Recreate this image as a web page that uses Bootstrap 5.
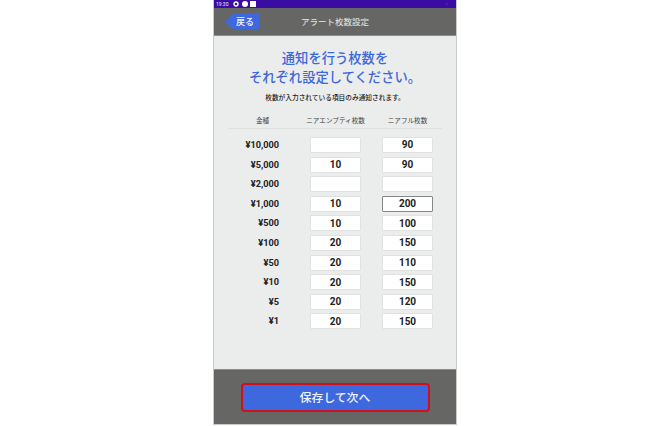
<!DOCTYPE html>
<html lang="ja"><head><meta charset="utf-8">
<link href="https://cdn.jsdelivr.net/npm/bootstrap@5.3.0/dist/css/bootstrap.min.css" rel="stylesheet">
<style>
html,body{height:100%;margin:0;background:#fff;overflow:hidden}
body{font-family:"Noto Sans CJK JP","Roboto",sans-serif}
.phone{width:244px;height:425px;margin-left:213px;border-left:1px solid #c9cbca;border-right:1px solid #c9cbca;border-bottom:1px solid #c9cbca}
.stat{height:8px;background:#3a0ca3;color:#e8e4f5;font-family:"Roboto",sans-serif;font-size:5px;line-height:8px;padding:0 8px 0 2px;gap:2px}
.stat svg{margin-left:3px}
.stat i{display:block;background:#fff}
.ic1{width:6px;height:6px;border-radius:50%;margin-left:1px}
.ic2{width:6px;height:6px}
.stat-r{font-size:4px;color:#b8aee0}
.hdr{height:28px;background:#666764;color:#e9e9e7;font-size:8.5px;border-bottom:1px solid #8c8d8a}
.back{position:absolute;left:11px;top:6px;width:34px;height:15px;background:#3e68de;color:#f2f5fe;font-size:9px;font-weight:500;clip-path:polygon(8px 0,100% 0,100% 100%,8px 100%,0 50%);padding-left:6px}
.hdr-in{height:100%}
.body-a{height:334px;background:#ebeded;padding:12.5px 14px 0}
.ttl{color:#3d68dc;font-size:13.3px;line-height:19px;font-weight:500;margin:0}
.sub{font-size:6.7px;line-height:9px;font-weight:500;color:#1e1e1e;margin:7px 0 0}
.grid-x{display:grid;grid-template-columns:61px 51px 51px;column-gap:21px}
.heads{margin-top:12.5px;height:14px;border-bottom:1px solid #dfe1e1;color:#444;font-size:6.6px;line-height:10px}
.heads span{justify-self:center;white-space:nowrap}
.heads .lab0{padding-left:8px}
.rows{margin-top:8px;row-gap:3.6px}
.amt{font-family:"Roboto",sans-serif;font-weight:700;font-size:9.2px;color:#222;text-align:right;line-height:16px;width:51px}
.cell.form-control{height:16px;min-height:0;padding:0;border:1px solid #e0e2e2;border-radius:1px;background:#fff;font-family:"Roboto",sans-serif;font-weight:700;font-size:10px;line-height:14px;color:#222;text-align:center;box-shadow:none}
.cell.act{border-color:#85878a}
.foot{height:55px;background:#666764;border-top:1px solid #8c8d8a}
.save{width:189px;height:29px;background:#3e68de;border:2px solid #d0101c;border-radius:4px;color:#f2f5fe;font-size:11.8px;font-weight:500;padding:0;line-height:24px}
.save:hover{background:#3e68de;color:#f2f5fe;border-color:#d0101c}
</style></head>
<body>
<div class="phone d-flex flex-column">
  <div class="stat d-flex align-items-center"><span>19:30</span><svg width="6" height="6" viewBox="0 0 6 6"><circle cx="3" cy="3" r="2" fill="none" stroke="#fff" stroke-width="1.4"/></svg><i class="ic1"></i><i class="ic2"></i><span class="ms-auto stat-r">◦◦</span></div>
  <div class="hdr position-relative">
    <div class="hdr-in d-flex align-items-center justify-content-center">アラート枚数設定</div>
    <div class="back d-flex align-items-center justify-content-center">戻る</div>
  </div>
  <div class="body-a">
    <h1 class="ttl text-center">通知を行う枚数を<br>それぞれ設定してください。</h1>
    <p class="sub text-center">枚数が入力されている項目のみ通知されます。</p>
    <div class="grid-x heads">
      <span class="lab0">金種</span><span>ニアエンプティ枚数</span><span>ニアフル枚数</span>
    </div>
    <div class="grid-x rows">
      <div class="amt">¥10,000</div><input class="cell form-control" value="" readonly><input class="cell form-control" value="90" readonly>
      <div class="amt">¥5,000</div><input class="cell form-control" value="10" readonly><input class="cell form-control" value="90" readonly>
      <div class="amt">¥2,000</div><input class="cell form-control" value="" readonly><input class="cell form-control" value="" readonly>
      <div class="amt">¥1,000</div><input class="cell form-control" value="10" readonly><input class="cell form-control act" value="200" readonly>
      <div class="amt">¥500</div><input class="cell form-control" value="10" readonly><input class="cell form-control" value="100" readonly>
      <div class="amt">¥100</div><input class="cell form-control" value="20" readonly><input class="cell form-control" value="150" readonly>
      <div class="amt">¥50</div><input class="cell form-control" value="20" readonly><input class="cell form-control" value="110" readonly>
      <div class="amt">¥10</div><input class="cell form-control" value="20" readonly><input class="cell form-control" value="150" readonly>
      <div class="amt">¥5</div><input class="cell form-control" value="20" readonly><input class="cell form-control" value="120" readonly>
      <div class="amt">¥1</div><input class="cell form-control" value="20" readonly><input class="cell form-control" value="150" readonly>
    </div>
  </div>
  <div class="foot d-flex align-items-center justify-content-center">
    <button class="btn save" type="button">保存して次へ</button>
  </div>
</div>
</body></html>
